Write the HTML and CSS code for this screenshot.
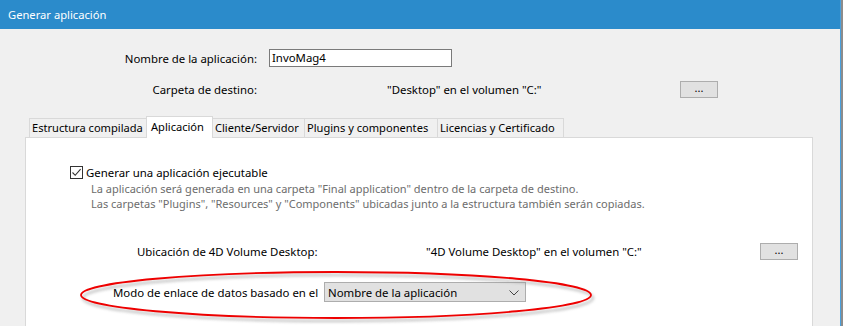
FILE: index.html
```html
<!DOCTYPE html>
<html lang="es">
<head>
<meta charset="utf-8">
<title>Generar aplicación</title>
<link rel="stylesheet" href="styles.css">
</head>
<body>
<div class="window">
  <div class="main">
    <div class="titlebar">Generar aplicación</div>
    <div class="form">
      <div class="row row-name">
        <span class="label">Nombre de la aplicación:</span>
        <span class="input">InvoMag4</span>
      </div>
      <div class="row row-dest">
        <span class="label">Carpeta de destino:</span>
        <span class="value">"Desktop" en el volumen "C:"</span>
        <span class="btn">...</span>
      </div>
    </div>
    <div class="tabs">
      <span class="tab">Estructura compilada</span>
      <span class="tab active">Aplicación</span>
      <span class="tab">Cliente/Servidor</span>
      <span class="tab">Plugins y componentes</span>
      <span class="tab">Licencias y Certificado</span>
    </div>
    <div class="panel">
      <div class="check-row">
        <span class="checkbox"><svg width="11" height="11" viewBox="0 0 11 11"><path d="M1.5 5.5 L4.2 8.3 L9.6 2.2" fill="none" stroke="#333" stroke-width="1.1"/></svg></span>
        <span class="check-label">Generar una aplicación ejecutable</span>
      </div>
      <div class="desc">
        <div>La aplicación será generada en una carpeta "Final application" dentro de la carpeta de destino.</div>
        <div>Las carpetas "Plugins", "Resources" y "Components" ubicadas junto a la estructura también serán copiadas.</div>
      </div>
      <div class="row row-vol">
        <span class="vol-label">Ubicación de 4D Volume Desktop:</span>
        <span class="vol-value">"4D Volume Desktop" en el volumen "C:"</span>
        <span class="btn">...</span>
      </div>
      <div class="row row-mode">
        <span class="mode-label">Modo de enlace de datos basado en el</span>
        <span class="select">Nombre de la aplicación<svg class="chev" width="10" height="6" viewBox="0 0 10 6"><path d="M0.5 0.5 L5 5 L9.5 0.5" fill="none" stroke="#444" stroke-width="1"/></svg></span>
      </div>
      <svg class="ellipse" width="540" height="64" viewBox="0 0 540 64">
        <defs>
          <filter id="sh" x="-10%" y="-50%" width="120%" height="200%">
            <feGaussianBlur stdDeviation="1.5"/>
          </filter>
        </defs>
        <ellipse cx="257" cy="29" rx="255" ry="23" fill="none" stroke="#9a9a9a" stroke-width="2" filter="url(#sh)" opacity="0.7" transform="translate(2,3)"/>
        <ellipse cx="257" cy="29" rx="255" ry="23" fill="none" stroke="#ee0000" stroke-width="1.8"/>
      </svg>
    </div>
  </div>
  <div class="edge"></div>
</div>
</body>
</html>
```
FILE: styles.css
```css
html, body {
  margin: 0;
  padding: 0;
}
body {
  width: 843px;
  height: 326px;
  overflow: hidden;
  background: #f0f0f0;
  font-family: "Noto Sans", "Open Sans", sans-serif;
  font-size: 11.4px;
  color: #000;
}
.window {
  display: flex;
  height: 326px;
}
.main {
  width: 840px;
  display: flex;
  flex-direction: column;
}
.edge {
  width: 2px;
  border-left: 1px solid #4aa0dc;
  background: #8c8c8c;
}
.titlebar {
  height: 29px;
  background: #2b8bcb;
  color: #fff;
  font-size: 11.2px;
  line-height: 29px;
  padding-left: 8px;
  box-sizing: border-box;
}
.form {
  padding-top: 20px;
}
.row {
  display: flex;
  align-items: center;
  white-space: nowrap;
}
.label {
  width: 257px;
  text-align: right;
  color: #000;
}
.row-name {
  height: 18px;
}
.input {
  margin-left: 12px;
  width: 183px;
  height: 18px;
  box-sizing: border-box;
  border: 1px solid #7a7a7a;
  background: #fff;
  line-height: 16px;
  padding-left: 2px;
}
.row-dest {
  margin-top: 14px;
  height: 17px;
}
.value {
  margin-left: 130px;
  width: 293px;
}
.btn {
  width: 38px;
  height: 17px;
  box-sizing: border-box;
  border: 1px solid #adadad;
  background: #e1e1e1;
  text-align: center;
  line-height: 11px;
  font-size: 11px;
}
.tabs {
  margin-top: 18px;
  margin-left: 29px;
  display: flex;
  align-items: flex-end;
  height: 21px;
  font-size: 11.1px;
}
.tab {
  height: 19px;
  box-sizing: border-box;
  border: 1px solid #d9d9d9;
  border-bottom: none;
  border-right: none;
  padding: 0 1px 0 2px;
  line-height: 18px;
  white-space: nowrap;
  overflow: hidden;
}
.tab:last-child {
  border-right: 1px solid #d9d9d9;
}
.tab:nth-child(1) { width: 117px; }
.tab:nth-child(2) { width: 67px; }
.tab:nth-child(3) { width: 91px; }
.tab:nth-child(4) { width: 133px; }
.tab:nth-child(5) { width: 127px; }
.tab.active {
  height: 22px;
  margin-bottom: -1px;
  background: #fff;
  border: 1px solid #d9d9d9;
  border-bottom: none;
  position: relative;
  z-index: 1;
  padding-top: 1px;
  padding-left: 4px;
}
.tab.active + .tab {
  border-left: none;
}
.panel {
  position: relative;
  margin-left: 25px;
  width: 788px;
  flex: 1;
  box-sizing: border-box;
  background: #fff;
  border: 1px solid #d9d9d9;
  border-bottom: none;
}
.check-row {
  display: flex;
  align-items: center;
  margin-top: 27px;
  margin-left: 44px;
  height: 14px;
}
.checkbox {
  width: 13px;
  height: 13px;
  box-sizing: border-box;
  border: 1px solid #333;
  display: flex;
  align-items: center;
  justify-content: center;
}
.check-label {
  margin-left: 3px;
}
.desc {
  margin-left: 65px;
  margin-top: 2px;
  color: #6d6d6d;
  line-height: 15px;
  font-size: 11px;
  white-space: nowrap;
}
.row-vol {
  margin-top: 32px;
  height: 17px;
}
.vol-label {
  margin-left: 111px;
  width: 289px;
}
.vol-value {
  width: 334px;
}
.row-mode {
  margin-top: 22px;
  height: 20px;
}
.mode-label {
  margin-left: 87px;
  width: 211px;
}
.select {
  width: 202px;
  height: 20px;
  box-sizing: border-box;
  border: 1px solid #adadad;
  background: #e1e1e1;
  display: flex;
  align-items: center;
  padding-left: 3px;
  position: relative;
}
.chev {
  position: absolute;
  right: 6px;
  top: 7px;
}
.ellipse {
  position: absolute;
  left: 53px;
  top: 128px;
  pointer-events: none;
}
```
